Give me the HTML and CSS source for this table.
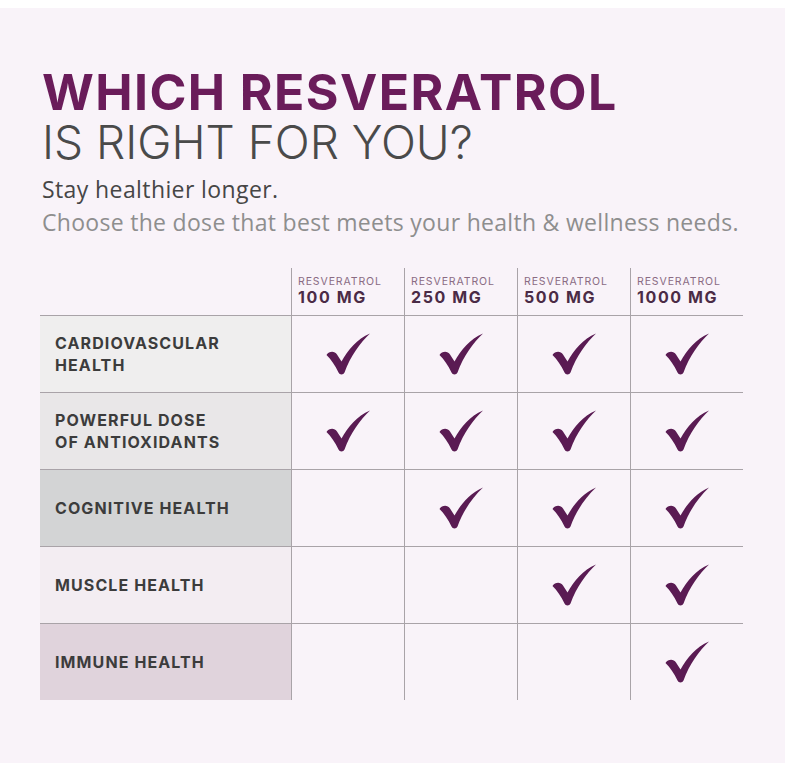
FILE: index.html
```html
<!DOCTYPE html>
<html>
<head>
<meta charset="utf-8">
<link rel="stylesheet" href="styles.css">
</head>
<body>
<svg width="0" height="0" class="defs" aria-hidden="true">
  <defs>
    <symbol id="check" viewBox="0 0 44 42">
      <path d="M0.5 22 C3 18 8.5 17.5 11 21.5 L15.5 28.5 C22 17 31 6 44 0.5 C34 10 24.5 23 18.5 39.5 C17.5 42 13.5 42 12.5 39.5 C9 32 5 26.5 0.5 22 Z"/>
    </symbol>
  </defs>
</svg>
<div class="page">
  <h1 class="title">WHICH RESVERATROL</h1>
  <h2 class="subtitle">IS RIGHT FOR YOU?</h2>
  <p class="lead">Stay healthier longer.</p>
  <p class="lead-sub">Choose the dose that best meets your health &amp; wellness needs.</p>

  <div class="table">
    <div class="hcell hcell-empty"></div>
    <div class="hcell"><span class="hsmall">RESVERATROL</span><span class="hbig">100 MG</span></div>
    <div class="hcell"><span class="hsmall">RESVERATROL</span><span class="hbig">250 MG</span></div>
    <div class="hcell"><span class="hsmall">RESVERATROL</span><span class="hbig">500 MG</span></div>
    <div class="hcell"><span class="hsmall">RESVERATROL</span><span class="hbig">1000 MG</span></div>

    <div class="label label-1">CARDIOVASCULAR<br>HEALTH</div>
    <div class="cell"><svg class="ck"><use href="#check"/></svg></div>
    <div class="cell"><svg class="ck"><use href="#check"/></svg></div>
    <div class="cell"><svg class="ck"><use href="#check"/></svg></div>
    <div class="cell"><svg class="ck"><use href="#check"/></svg></div>

    <div class="label label-2">POWERFUL DOSE<br>OF ANTIOXIDANTS</div>
    <div class="cell"><svg class="ck"><use href="#check"/></svg></div>
    <div class="cell"><svg class="ck"><use href="#check"/></svg></div>
    <div class="cell"><svg class="ck"><use href="#check"/></svg></div>
    <div class="cell"><svg class="ck"><use href="#check"/></svg></div>

    <div class="label label-3">COGNITIVE HEALTH</div>
    <div class="cell"></div>
    <div class="cell"><svg class="ck"><use href="#check"/></svg></div>
    <div class="cell"><svg class="ck"><use href="#check"/></svg></div>
    <div class="cell"><svg class="ck"><use href="#check"/></svg></div>

    <div class="label label-4">MUSCLE HEALTH</div>
    <div class="cell"></div>
    <div class="cell"></div>
    <div class="cell"><svg class="ck"><use href="#check"/></svg></div>
    <div class="cell"><svg class="ck"><use href="#check"/></svg></div>

    <div class="label label-5">IMMUNE HEALTH</div>
    <div class="cell"></div>
    <div class="cell"></div>
    <div class="cell"></div>
    <div class="cell"><svg class="ck"><use href="#check"/></svg></div>
  </div>
</div>
</body>
</html>
```

FILE: styles.css
```css
html { background: #ffffff; }
body { margin: 0; }
.defs { position: absolute; width: 0; height: 0; }
.page {
  margin-top: 8px;
  height: 755px;
  background: #f9f3f9;
  padding: 58px 0 0 42px;
  box-sizing: border-box;
  font-family: Inter, "Liberation Sans", sans-serif;
}
.title {
  margin: 0;
  font-size: 50px;
  line-height: 52px;
  font-weight: 700;
  color: #6a1c5a;
  letter-spacing: 1.4px;
}
.subtitle {
  margin: 0;
  font-size: 46px;
  line-height: 48px;
  font-weight: 300;
  color: #4a4a4a;
  letter-spacing: 0px;
}
.lead {
  margin: 7px 0 0;
  font-family: "Open Sans", Lato, sans-serif;
  font-size: 23px;
  line-height: 33px;
  font-weight: 500;
  letter-spacing: 0.4px;
  color: #464646;
}
.lead-sub {
  margin: 0;
  font-family: "Open Sans", Lato, sans-serif;
  font-size: 23px;
  line-height: 33px;
  letter-spacing: 0.3px;
  color: #8e8e8e;
}
.table {
  margin: 29px 0 0 -2px;
  display: grid;
  grid-template-columns: 251px repeat(4, 113px);
  grid-template-rows: 47px repeat(5, 77px);
}
.hcell {
  border-left: 1.5px solid #a9a3a8;
  display: flex;
  flex-direction: column;
  justify-content: flex-end;
  padding: 0 0 9px 6px;
}
.hcell-empty { border-left: none; }
.hsmall {
  font-size: 10.5px;
  line-height: 12px;
  letter-spacing: 0.9px;
  color: #8a6b83;
  font-weight: 400;
}
.hbig {
  font-size: 16px;
  line-height: 18px;
  font-weight: 700;
  letter-spacing: 1.6px;
  color: #4b2b46;
}
.label {
  border-top: 1.5px solid #a9a3a8;
  display: flex;
  align-items: center;
  padding-left: 15px;
  font-size: 16px;
  line-height: 22px;
  font-weight: 700;
  letter-spacing: 1.1px;
  color: #3c3c3c;
}
.label-1 { background: #efeeee; }
.label-2 { background: #e9e7e8; }
.label-3 { background: #d3d4d5; }
.label-4 { background: #f3edf2; }
.label-5 { background: #e0d3dc; }
.cell {
  border-top: 1.5px solid #a9a3a8;
  border-left: 1.5px solid #a9a3a8;
  display: flex;
  align-items: center;
  justify-content: center;
}
.ck {
  width: 44px;
  height: 42px;
  fill: #5a1b53;
}
```
